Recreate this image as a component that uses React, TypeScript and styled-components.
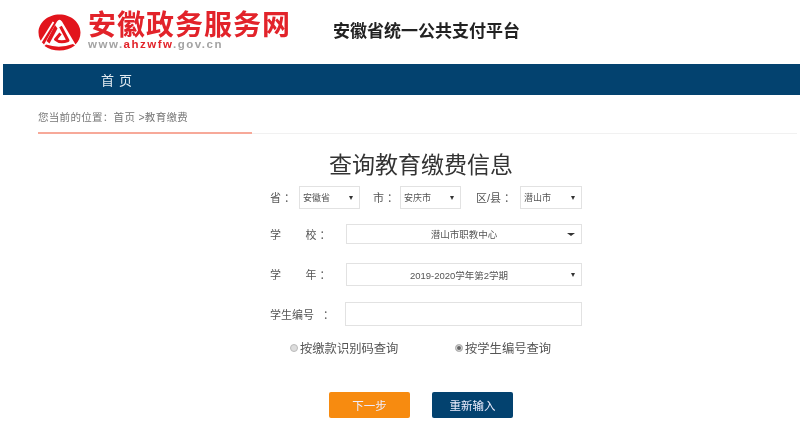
import styled, { createGlobalStyle } from "styled-components";

const cjk = `"Liberation Sans", "Noto Sans CJK SC", sans-serif`;

const GlobalStyle = createGlobalStyle`
  html, body {
    margin: 0;
    padding: 0;
    background: #fff;
  }
  body {
    font-family: ${cjk};
    color: #444;
  }
`;

const Page = styled.div`
  width: 800px;
  height: 441px;
  overflow: hidden;
  background: #fff;
  filter: blur(0.4px);
`;

const Header = styled.header`
  height: 64px;
  display: flex;
  align-items: flex-start;
  padding-left: 38px;
`;

const LogoMark = styled.svg`
  width: 43px;
  height: 37px;
  margin-top: 14px;
  flex-shrink: 0;
`;

const LogoText = styled.div`
  margin: 13px 0 0 7px;
  width: 206px;
`;

const LogoTitle = styled.div`
  font-size: 28px;
  line-height: 26px;
  font-weight: 700;
  letter-spacing: 1px;
  color: #e2232a;
  white-space: nowrap;
`;

const LogoUrl = styled.div`
  font-size: 11.5px;
  line-height: 11px;
  font-weight: 700;
  letter-spacing: 1.5px;
  color: #a3a3a3;
  white-space: nowrap;
  span {
    color: #e2232a;
  }
`;

const PlatformName = styled.div`
  margin: 21px 0 0 39px;
  font-size: 17px;
  line-height: 22px;
  font-weight: 700;
  color: #222;
  white-space: nowrap;
`;

const NavBar = styled.nav`
  height: 31px;
  margin-left: 3px;
  background: #03426f;
  display: flex;
  align-items: center;
  padding-left: 98px;
`;

const NavItem = styled.span`
  font-size: 13px;
  letter-spacing: 5px;
  color: #e3ebf1;
`;

const Crumbs = styled.div`
  margin: 0 3px 0 38px;
  height: 38px;
  border-bottom: 1px solid #f1f1f1;
  position: relative;
  font-size: 10.5px;
  letter-spacing: 0.3px;
  line-height: 44px;
  color: #777;
  &::after {
    content: "";
    position: absolute;
    left: 0;
    bottom: -1px;
    width: 214px;
    height: 2px;
    background: #f7a999;
  }
`;

const Title = styled.h1`
  margin: 19px 0 0 0;
  padding-left: 42px;
  text-align: center;
  font-size: 23px;
  line-height: 24px;
  font-weight: 400;
  color: #333;
`;

const Form = styled.form`
  width: 312px;
  margin: 9px 0 0 270px;
  display: flex;
  flex-direction: column;
`;

const Row = styled.div<{ $height: number; $gap: number }>`
  display: flex;
  align-items: center;
  height: ${(p) => p.$height}px;
  margin-bottom: ${(p) => p.$gap}px;
`;

const Label = styled.label<{ $width: number; $offset?: number }>`
  width: ${(p) => p.$width}px;
  margin-left: ${(p) => p.$offset ?? 0}px;
  flex-shrink: 0;
  font-size: 11px;
  padding-bottom: 1px;
  color: #555;
  white-space: pre;
`;

const Colon = styled.span<{ $gap: number }>`
  margin-left: ${(p) => p.$gap}px;
`;

const SelectBox = styled.div<{ $lead?: number; $width?: number }>`
  box-sizing: border-box;
  height: 100%;
  width: ${(p) => (p.$width ? `${p.$width}px` : "auto")};
  flex: ${(p) => (p.$width ? "none" : 1)};
  border: 1px solid #e2e2e2;
  background: #fff;
  display: flex;
  align-items: center;
  padding: 0 6px 0 ${(p) => p.$lead ?? 3}px;
  font-size: 9px;
  color: #555;
`;

const SelectText = styled.span<{ $center?: boolean }>`
  flex: 1;
  text-align: ${(p) => (p.$center ? "center" : "left")};
  font-size: ${(p) => (p.$center ? "9.5px" : "9px")};
  white-space: nowrap;
`;

const Caret = styled.i<{ $wide?: boolean }>`
  width: 0;
  height: 0;
  border-style: solid;
  border-color: #333 transparent transparent;
  border-width: ${(p) => (p.$wide ? "3px 4px 0" : "4px 2.5px 0")};
`;

const TextBox = styled.input`
  box-sizing: border-box;
  flex: 1;
  min-width: 0;
  height: 100%;
  border: 1px solid #e2e2e2;
  background: #fff;
  outline: none;
  padding: 0;
`;

const RadioRow = styled.div`
  display: flex;
  width: 312px;
  margin: 0 0 0 20px;
  height: 16px;
  align-items: center;
`;

const RadioItem = styled.label<{ $width: number }>`
  width: ${(p) => p.$width}px;
  display: flex;
  align-items: center;
  font-size: 12.3px;
  color: #555;
  white-space: nowrap;
`;

const Dot = styled.i<{ $on?: boolean }>`
  width: 8px;
  height: 8px;
  margin-right: 2px;
  border-radius: 50%;
  box-sizing: border-box;
  border: 1px solid #bbb;
  background: ${(p) => (p.$on ? "#666" : "#ddd")};
  box-shadow: ${(p) => (p.$on ? "inset 0 0 0 1px #ddd" : "none")};
`;

const Actions = styled.div`
  display: flex;
  gap: 22px;
  margin: 36px 0 0 329px;
`;

const ActionButton = styled.button<{ $tone: string }>`
  width: 81px;
  height: 26px;
  border: none;
  border-radius: 2px;
  padding: 0;
  background: ${(p) => p.$tone};
  color: #eef;
  font-family: ${cjk};
  font-size: 11.5px;
`;

const Logo = () => (
  <LogoMark viewBox="0 0 43 37">
    {/* dome, cut off below the sides */}
    <path
      fill="#e2141c"
      d="M21.5 0.5C33 0.5 42.5 8.5 42.5 18.5 42.5 23.5 40.5 27.5 37.5 30.5L24 7.5Q21.5 4 19 7.5L6 30.5C2.5 27.5 0.5 23.5 0.5 18.5 0.5 8.5 10 0.5 21.5 0.5Z"
    />
    {/* white slash across the left side */}
    <path d="M15.5 8 L3 28" stroke="#fff" strokeWidth="1.8" fill="none" />
    {/* inner left flank */}
    <path fill="#e2141c" d="M17 11 L8.5 27 L11.5 29.5 L19.5 14.5 Z" />
    {/* inner spiral */}
    <path
      d="M22.5 12.5 L30 26.5 Q22 29.5 17.5 25.5 L22.5 19.5"
      stroke="#e2141c"
      strokeWidth="3"
      fill="none"
      strokeLinejoin="round"
    />
    {/* bottom crescent */}
    <path
      fill="#e2141c"
      d="M8 30.5 Q21.5 35 35 30 L37 31.5 Q30 36.5 21.5 36.5 Q13 36.5 6.5 32 Z"
    />
  </LogoMark>
);

export default function App() {
  return (
    <Page>
      <GlobalStyle />
      <Header>
        <Logo />
        <LogoText>
          <LogoTitle>安徽政务服务网</LogoTitle>
          <LogoUrl>
            www.<span>ahzwfw</span>.gov.cn
          </LogoUrl>
        </LogoText>
        <PlatformName>安徽省统一公共支付平台</PlatformName>
      </Header>
      <NavBar>
        <NavItem>首页</NavItem>
      </NavBar>
      <Crumbs>您当前的位置：首页 &gt;教育缴费</Crumbs>
      <Title>查询教育缴费信息</Title>
      <Form>
        <Row $height={23} $gap={15}>
          <Label $width={29}>
            省<Colon $gap={3}>：</Colon>
          </Label>
          <SelectBox $width={61}>
            <SelectText>安徽省</SelectText>
            <Caret />
          </SelectBox>
          <Label $width={27} $offset={13}>
            市<Colon $gap={3}>：</Colon>
          </Label>
          <SelectBox $width={61}>
            <SelectText>安庆市</SelectText>
            <Caret />
          </SelectBox>
          <Label $width={44} $offset={15}>
            区/县<Colon $gap={3}>：</Colon>
          </Label>
          <SelectBox $width={62}>
            <SelectText>潜山市</SelectText>
            <Caret />
          </SelectBox>
        </Row>
        <Row $height={20} $gap={19}>
          <Label $width={76}>
            {"学        校"}
            <Colon $gap={3}>：</Colon>
          </Label>
          <SelectBox $lead={14}>
            <SelectText $center>潜山市职教中心</SelectText>
            <Caret $wide />
          </SelectBox>
        </Row>
        <Row $height={23} $gap={16}>
          <Label $width={76}>
            {"学        年"}
            <Colon $gap={3}>：</Colon>
          </Label>
          <SelectBox $lead={0}>
            <SelectText $center>2019-2020学年第2学期</SelectText>
            <Caret />
          </SelectBox>
        </Row>
        <Row $height={24} $gap={14}>
          <Label $width={75}>
            学生编号<Colon $gap={9}>：</Colon>
          </Label>
          <TextBox />
        </Row>
        <RadioRow>
          <RadioItem $width={165}>
            <Dot />
            按缴款识别码查询
          </RadioItem>
          <RadioItem $width={120}>
            <Dot $on />
            按学生编号查询
          </RadioItem>
        </RadioRow>
      </Form>
      <Actions>
        <ActionButton type="button" $tone="#f78b10">
          下一步
        </ActionButton>
        <ActionButton type="button" $tone="#03426f">
          重新输入
        </ActionButton>
      </Actions>
    </Page>
  );
}
